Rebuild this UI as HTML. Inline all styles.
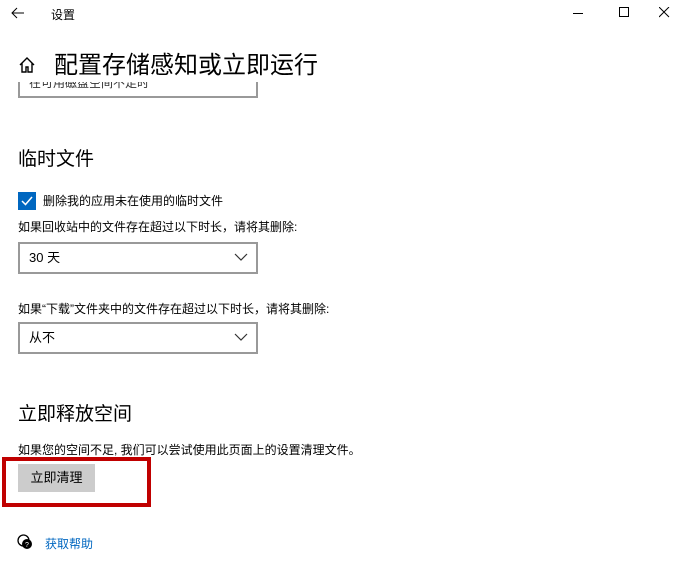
<!DOCTYPE html>
<html><head><meta charset="utf-8"><style>
body{margin:0;width:680px;height:580px;background:#fff;font-family:"Liberation Sans","Noto Sans CJK SC",sans-serif;color:#000;position:relative;overflow:hidden}
.a{position:absolute;white-space:nowrap}
.dd{position:absolute;left:18px;width:236px;height:28px;border:2px solid #999;box-sizing:content-box;font-size:13px;line-height:28px}
.dd span{position:absolute;left:9px}
.dd svg{position:absolute;right:8px;top:9px}
</style></head><body>
<svg class="a" style="left:11px;top:7px" width="14" height="12" viewBox="0 0 14 12"><path d="M6 1L1 6L6 11M1 6H13" fill="none" stroke="#000" stroke-width="1"/></svg>
<div class="a" style="left:51px;top:6px;font-size:12px">设置</div>
<svg class="a" style="left:573px;top:13px" width="10" height="2"><path d="M0 .5H10" stroke="#000"/></svg>
<svg class="a" style="left:619px;top:7px" width="11" height="11"><rect x=".5" y=".5" width="9" height="9" fill="none" stroke="#000"/></svg>
<svg class="a" style="left:659px;top:7px" width="11" height="11"><path d="M0 0L10 10M10 0L0 10" stroke="#000"/></svg>
<svg class="a" style="left:18px;top:56px" width="18" height="18" viewBox="0 0 18 18"><path d="M2 9L9 2L16 9M4 7V16H8V11H10V16H14V7" fill="none" stroke="#000" stroke-width="1.4"/></svg>
<div style="position:absolute;left:18px;top:82px;width:236px;height:14px;border:2px solid #999;border-top:none;overflow:hidden"><span style="position:absolute;left:9px;top:-8px;font-size:12px;color:#333">在可用磁盘空间不足时</span></div>
<div class="a" style="left:54px;top:48px;font-size:24px;line-height:36px;background:#fff;height:34px;padding-right:6px">配置存储感知或立即运行</div>
<div class="a" style="left:18px;top:144px;font-size:19px">临时文件</div>
<div class="a" style="left:18px;top:192px;width:18px;height:18px;background:#0067c0"></div>
<svg class="a" style="left:18px;top:192px" width="18" height="18"><path d="M4 9L7.5 12.5L14 5" fill="none" stroke="#fff" stroke-width="1.5"/></svg>
<div class="a" style="left:43px;top:192px;font-size:12px">删除我的应用未在使用的临时文件</div>
<div class="a" style="left:18px;top:218px;font-size:12px">如果回收站中的文件存在超过以下时长，请将其删除:</div>
<div class="dd" style="top:242px"><span>30 天</span><svg width="14" height="8"><path d="M1 1L7 7L13 1" fill="none" stroke="#333" stroke-width="1.2"/></svg></div>
<div class="a" style="left:18px;top:300px;font-size:12px">如果“下载”文件夹中的文件存在超过以下时长，请将其删除:</div>
<div class="dd" style="top:322px"><span>从不</span><svg width="14" height="8"><path d="M1 1L7 7L13 1" fill="none" stroke="#333" stroke-width="1.2"/></svg></div>
<div class="a" style="left:18px;top:399px;font-size:19px">立即释放空间</div>
<div class="a" style="left:18px;top:441px;font-size:12px">如果您的空间不足, 我们可以尝试使用此页面上的设置清理文件。</div>
<div class="a" style="left:2px;top:457px;width:141px;height:42px;border:4px solid #c00000"></div>
<div class="a" style="left:18px;top:464px;width:77px;height:28px;background:#ccc;font-size:13px;line-height:28px;text-align:center">立即清理</div>
<svg class="a" style="left:17px;top:534px" width="16" height="16" viewBox="0 0 16 16"><circle cx="6.5" cy="6.5" r="5.5" fill="none" stroke="#000" stroke-width="1.3"/><circle cx="10" cy="10" r="5" fill="#000"/><text x="10" y="13" font-size="7" fill="#fff" text-anchor="middle" font-family="Liberation Sans">?</text></svg>
<div class="a" style="left:45px;top:535px;font-size:12px;color:#0067c0">获取帮助</div>
</body></html>
